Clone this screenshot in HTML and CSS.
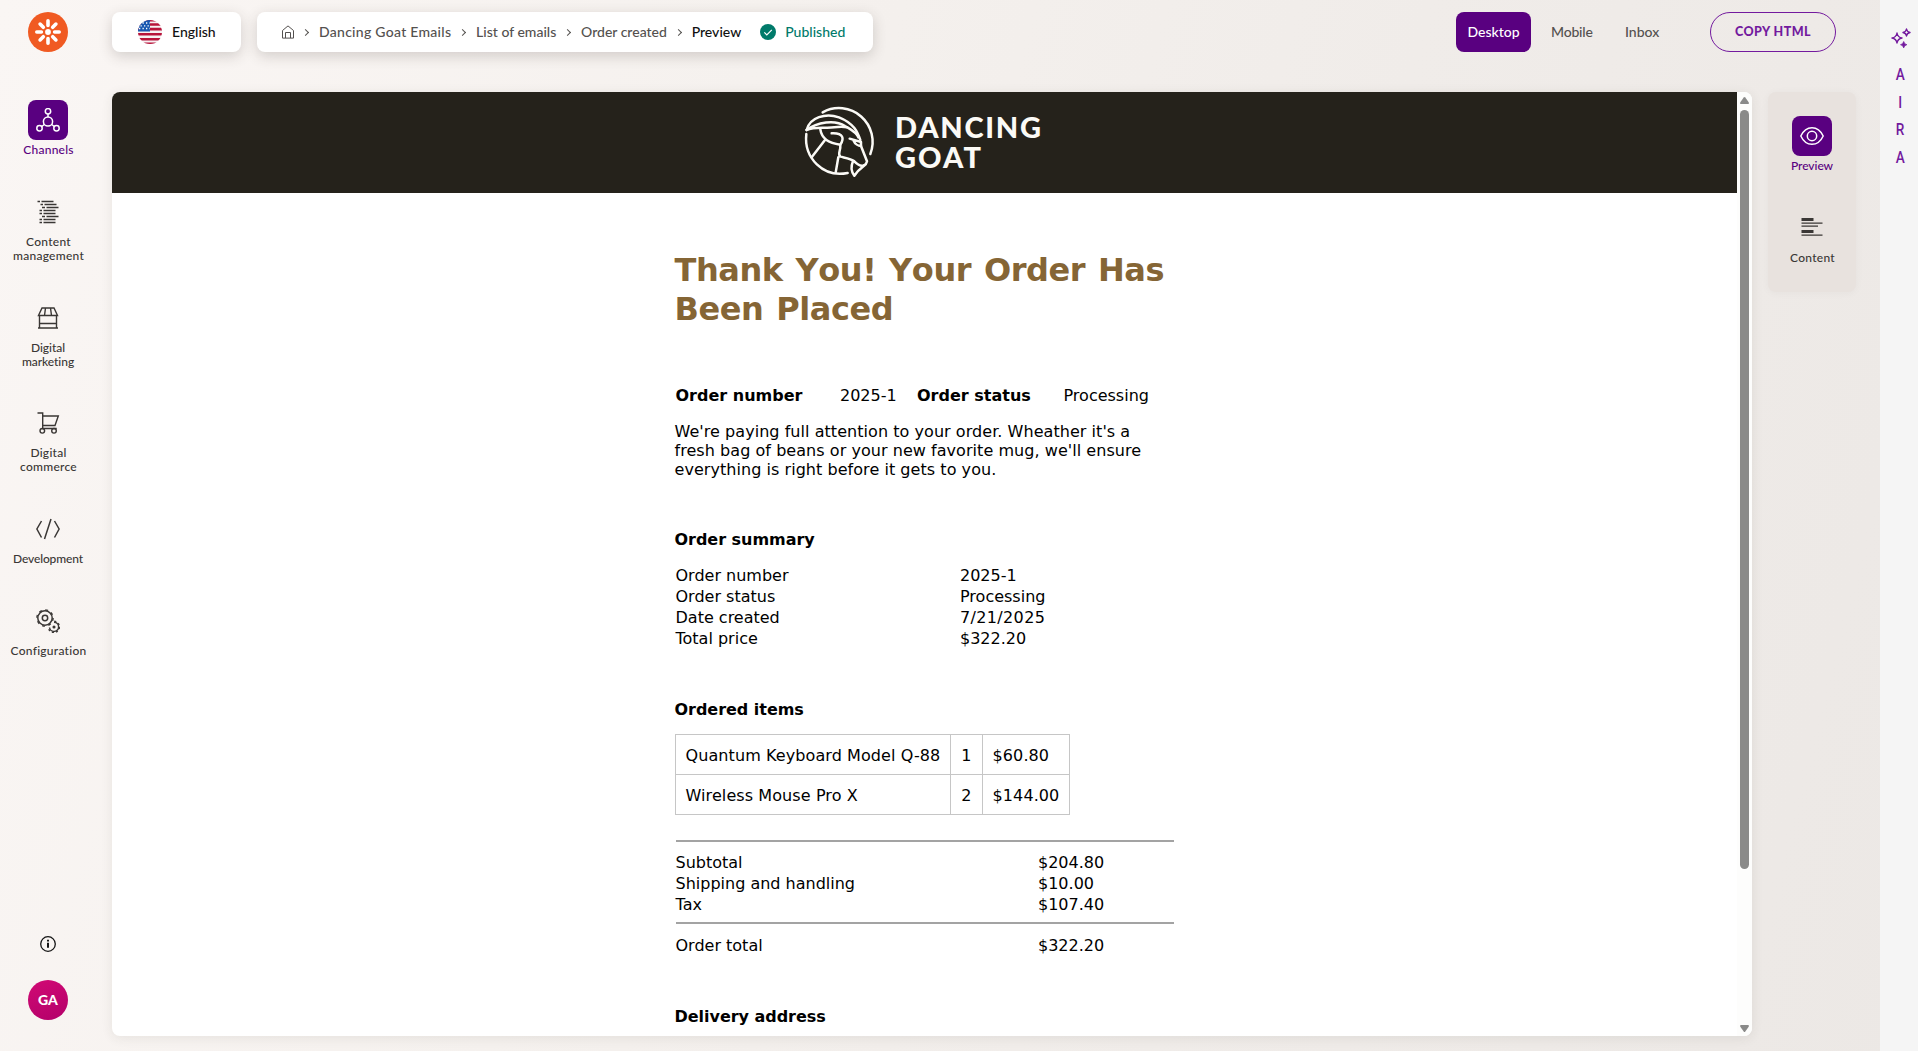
FILE: index.html
```html
<!DOCTYPE html>
<html lang="en">
<head>
<meta charset="utf-8">
<title>Order created - Preview</title>
<link rel="stylesheet" href="styles.css">
</head>
<body>
<div class="app">
  <nav class="sidebar">
    <svg class="logo" viewBox="0 0 40 40" width="40" height="40">
      <circle cx="20" cy="20" r="20" fill="#f05a22"/>
      <circle cx="20" cy="20" r="2.9" fill="#fff"/>
      <g stroke="#fff" stroke-width="3.6" stroke-linecap="round">
        <path d="M20 8.8v4.6M20 26.600v4.600M8.800 20h4.600M26.600 20h4.600M12.100 12.100l3.200 3.200M24.700 24.700l3.200 3.200M12.100 27.900l3.200-3.200M24.700 15.300l3.200-3.200"/>
      </g>
    </svg>
    <ul class="menu">
      <li class="item active">
        <span class="tile"><svg viewBox="0 0 24 24" width="24" height="24" fill="none" stroke="#fff" stroke-width="1.500"><circle cx="12" cy="13.500" r="4.600"/><circle cx="12" cy="3.300" r="2.700"/><circle cx="3.500" cy="20.300" r="2.700"/><circle cx="20.500" cy="20.300" r="2.700"/><path d="M12 6v3M8.300 16.500l-2.500 2M15.700 16.500l2.500 2"/></svg></span>
        <span class="label wide">Channels</span>
      </li>
      <li class="item">
        <span class="tile"><svg viewBox="0 0 24 24" width="24" height="24" fill="none" stroke="#3a3735" stroke-width="1.400"><path d="M1.500 1.500h2.500M5.500 1.500h12M4.500 4.500h2.500M8.500 4.500h12M6 7.500h3M10.500 7.500h12M3.500 10.500h2.500M7.500 10.500h12M3.500 13.500h2.500M7.500 13.500h12M6 16.500h3M10.500 16.500h12M3.500 19.500h2.500M7.500 19.500h12M3.500 22.500h2.500M7.500 22.500h12"/></svg></span>
        <span class="label wide">Content<br>management</span>
      </li>
      <li class="item">
        <span class="tile"><svg viewBox="0 0 24 24" width="24" height="24" fill="none" stroke="#3a3735" stroke-width="1.400"><path d="M6 2h12l3.500 7.500h-19zM9.500 2l-1 7.500M14.500 2l1 7.500M3.500 9.500v12.500M20.500 9.500v12.500M3.500 17.500h17M2 22h20"/></svg></span>
        <span class="label close">Digital<br>marketing</span>
      </li>
      <li class="item">
        <span class="tile"><svg viewBox="0 0 24 24" width="24" height="24" fill="none" stroke="#3a3735" stroke-width="1.400"><path d="M1.500 2h5.200v15.500h14M6.700 5h15.600l-3.300 9.500h-12.300"/><circle cx="6.300" cy="19.800" r="2.300"/><circle cx="18" cy="19.800" r="2.300"/></svg></span>
        <span class="label wide">Digital<br>commerce</span>
      </li>
      <li class="item">
        <span class="tile"><svg viewBox="0 0 24 24" width="24" height="24" fill="none" stroke="#3a3735" stroke-width="1.500"><path d="M5.500 4L.9 12l4.600 8.500M18.500 4l4.600 8-4.600 8.500M15 2L8.500 22"/></svg></span>
        <span class="label tight">Development</span>
      </li>
      <li class="item">
        <span class="tile"><svg viewBox="0 0 24 24" width="24" height="24" fill="none" stroke="#3a3735" stroke-width="1.500"><circle cx="9" cy="9" r="2.700"/><circle cx="9" cy="9" r="7.200"/><circle cx="9" cy="9" r="8.100" stroke-width="1.400" stroke-dasharray="2.800 3.560"/><path d="M13.500 18.500a4.600 4.600 0 1 0 4.500-5.300"/><path d="M12.800 20.300a5.600 5.600 0 1 0 5.200-8" stroke-dasharray="2 2.200"/><circle cx="18" cy="18" r=".8" fill="#3a3735"/></svg></span>
        <span class="label wide">Configuration</span>
      </li>
    </ul>
    <svg class="info" viewBox="0 0 16 16" width="16" height="16"><circle cx="8" cy="8" r="7.300" fill="none" stroke="#151515" stroke-width="1.300"/><path d="M8 3.700v1.900M8 6.800v5" stroke="#151515" stroke-width="2"/></svg>
    <span class="avatar">GA</span>
  </nav>

  <main class="main">
    <header class="topbar">
      <div class="card language">
        <svg viewBox="0 0 24 24" width="24" height="24">
          <defs><clipPath id="flag"><circle cx="12" cy="12" r="12"/></clipPath></defs>
          <g clip-path="url(#flag)">
            <path fill="#f7f0f2" d="M0 0h24v24H0z"/>
            <path fill="#b8133a" d="M0 0h24v1.500H0zM0 3.200h24v2.500H0zM0 7.800h24v2.700H0zM0 13h24v2.600H0zM0 18h24v2.400H0zM0 22.500h24v1.500H0z"/>
            <path fill="#1a57b0" d="M0 0h12v11.500H0z"/>
            <path stroke="#fff" stroke-width="1.300" stroke-dasharray="1.300 2.200" d="M1 3h11M2.500 5.800h9.500M1 8.500h11"/>
          </g>
        </svg>
        <span>English</span>
      </div>
      <div class="card crumbs">
        <svg class="home" viewBox="0 0 14 14" width="14" height="14" fill="none" stroke="#54514f"><path d="M1.500 5.500L7 .9l5.500 4.600v7.600h-11zM4.500 13V7.500h5V13"/></svg>
        <i class="chevron"></i><span class="spread">Dancing Goat Emails</span>
        <i class="chevron"></i><span>List of emails</span>
        <i class="chevron"></i><span>Order created</span>
        <i class="chevron"></i><span class="current">Preview</span>
        <span class="status"><svg viewBox="0 0 16 16" width="16" height="16"><circle cx="8" cy="8" r="8" fill="#007a6a"/><path d="M4.300 8.300l2.500 2.500 5-5" fill="none" stroke="#fff" stroke-width="1.200"/></svg>Published</span>
      </div>
      <div class="modes">
        <span class="mode selected">Desktop</span>
        <span class="mode mobile">Mobile</span>
        <span class="mode inbox">Inbox</span>
      </div>
      <span class="copy">COPY HTML</span>
    </header>

    <div class="workspace">
      <section class="preview">
        <div class="mail">
          <div class="banner">
            <svg viewBox="0 0 250 86" width="250" height="86">
              <g transform="scale(.3333)" fill="none" stroke="#fbfaf6" stroke-width="7.500" stroke-linecap="round" stroke-linejoin="round">
                <path d="M83 43A101 101 0 0 1 226 168"/>
                <path d="M34 108C26 180 85 240 158 225"/>
                <path d="M35 96C44 58 92 44 132 58C178 76 188 104 196 126"/>
                <path d="M35 96C66 72 120 64 150 84C166 94 184 102 190 118"/>
                <path d="M35 96C60 84 95 92 118 88C134 86 145 86 156 88"/>
                <path d="M76 94C80 122 104 136 136 140"/>
                <path d="M110 106C146 104 148 122 136 140C138 160 126 168 136 176C152 180 168 182 178 190C188 200 196 206 206 202"/>
                <path d="M90 126L50 178M130 178L122 224"/>
                <path d="M164 122L198 132L198 144C190 144 180 138 176 128"/>
                <path d="M198 144L216 190C214 206 200 202 178 233C166 218 168 204 174 190"/>
              </g>
              <g class="wordmark" fill="#fbfaf6">
                <text x="100" y="40" textLength="146">DANCING</text>
                <text x="100" y="70" textLength="86">GOAT</text>
              </g>
            </svg>
          </div>
          <article class="letter">
            <h1>Thank You! Your Order Has Been Placed</h1>
            <div class="headline">
              <b>Order number</b><span>2025-1</span><b>Order status</b><span>Processing</span>
            </div>
            <p>We're paying full attention to your order. Wheather it's a fresh bag of beans or your new favorite mug, we'll ensure everything is right before it gets to you.</p>
            <h2>Order summary</h2>
            <dl class="summary">
              <dt>Order number</dt><dd>2025-1</dd>
              <dt>Order status</dt><dd>Processing</dd>
              <dt>Date created</dt><dd class="date">7/21/2025</dd>
              <dt>Total price</dt><dd>$322.20</dd>
            </dl>
            <h2 class="items-title">Ordered items</h2>
            <table class="items">
              <tr><td>Quantum Keyboard Model Q-88</td><td>1</td><td>$60.80</td></tr>
              <tr><td>Wireless Mouse Pro X</td><td>2</td><td>$144.00</td></tr>
            </table>
            <dl class="totals">
              <dt>Subtotal</dt><dd>$204.80</dd>
              <dt>Shipping and handling</dt><dd>$10.00</dd>
              <dt>Tax</dt><dd>$107.40</dd>
            </dl>
            <dl class="totals grand">
              <dt>Order total</dt><dd>$322.20</dd>
            </dl>
            <h2 class="delivery">Delivery address</h2>
          </article>
        </div>
        <div class="scrollbar">
          <svg viewBox="0 0 9 7" width="9" height="7"><path d="M3.700.6q.8-1 1.600 0L8.700 5.200Q9.300 7 8 7H1Q-.3 7 .3 5.200z" fill="#8a8a89"/></svg>
          <i class="thumb"></i>
          <svg class="down" viewBox="0 0 9 7" width="9" height="7"><path d="M3.700 6.400q.8 1 1.600 0L8.700 1.800Q9.300 0 8 0H1Q-.3 0 .3 1.800z" fill="#8a8a89"/></svg>
        </div>
      </section>
      <aside class="tabs">
        <div class="item active">
          <span class="tile"><svg viewBox="0 0 24 24" width="24" height="24" fill="none" stroke="#fff" stroke-width="1.500"><path d="M.8 12C6 .9 18 .9 23.200 12C18 23.100 6 23.100.8 12z"/><circle cx="12" cy="12" r="4.700"/></svg></span>
          <span class="label close">Preview</span>
        </div>
        <div class="item">
          <span class="tile"><svg viewBox="0 0 24 24" width="24" height="24" fill="#3a3735"><path d="M1.500 2h12v3H1.500zM1.500 6.500h21v1.300h-21zM1.500 9.500h16.500v1.300H1.500zM1.500 14h12v3H1.500zM1.500 18.500h21v1.300h-21z"/></svg></span>
          <span class="label wide">Content</span>
        </div>
      </aside>
    </div>
  </main>

  <aside class="aira">
    <svg viewBox="0 0 20 20" width="20" height="20" fill="none" stroke="#731a9e" stroke-width="1.400" stroke-linejoin="round"><path d="M6 5q.7 4.300 5 5-4.300.7-5 5-.7-4.300-5-5 4.300-.7 5-5zM15.500 1q.5 3 3.500 3.500-3 .5-3.500 3.500-.5-3-3.500-3.500 3-.5 3.500-3.500z"/><path fill="#731a9e" stroke-width=".7" d="M12.700 13.500q.5 2.700 3.200 3.200-2.700.5-3.200 3.200-.5-2.700-3.200-3.200 2.700-.5 3.200-3.200z"/></svg>
    <span>A</span><span>I</span><span>R</span><span>A</span>
  </aside>
</div>
</body>
</html>
```
FILE: styles.css
```css
* { box-sizing: border-box; }

body {
  margin: 0;
  font: 500 14px/20px Lato, sans-serif;
  color: #54514f;
}

ul, dl, dd, h1, h2, p { margin: 0; padding: 0; }
svg { display: block; flex: none; }

.app {
  display: flex;
  height: 1051px;
  overflow: hidden;
  background: linear-gradient(105deg, #faf6f4 0%, #f5f1ee 35%, #f0ece9 65%, #ece8e5 100%);
}

/* Left navigation */
.sidebar {
  width: 96px;
  padding: 12px 0 31px;
  display: flex;
  flex-direction: column;
  align-items: center;
}
.menu {
  list-style: none;
  margin-top: 48px;
  display: flex;
  flex-direction: column;
  gap: 35px;
}
.item {
  display: flex;
  flex-direction: column;
  align-items: center;
  gap: 3px;
  color: #3a3735;
}
.tile {
  width: 40px;
  height: 40px;
  border-radius: 8px;
  display: flex;
  align-items: center;
  justify-content: center;
}
.active { color: #590080; }
.active .tile { background: #590080; }
.label {
  padding-left: 1px;
  font-size: 12px;
  line-height: 14px;
  text-align: center;
  white-space: nowrap;
}
.close { line-height: 13.500px; letter-spacing: -0.05px; padding-left: 0; }
.wide { letter-spacing: 0.27px; }
.tight { letter-spacing: -0.12px; padding-left: 0; }
.info { margin-top: auto; }
.avatar {
  width: 40px;
  height: 40px;
  margin-top: 28px;
  border-radius: 50%;
  background: linear-gradient(160deg, #d10a74, #b3006a);
  color: #fff;
  font-size: 14px;
  font-weight: 900;
  line-height: 40px;
  text-align: center;
}

/* Top bar */
.main { flex: 1; padding: 12px 24px 0 16px; }
.topbar { display: flex; height: 40px; }
.card {
  display: flex;
  align-items: center;
  height: 40px;
  border-radius: 8px;
  background: #fff;
  box-shadow: 0 4px 14px rgba(60, 50, 45, 0.2);
  white-space: nowrap;
}
.language { width: 129px; padding-left: 26px; gap: 10px; color: #111; }
.crumbs { width: 616px; margin-left: 16px; padding-left: 24px; }
.home { margin-right: 10px; }
.chevron {
  width: 5px;
  height: 5px;
  margin: 0 11px 0 -2px;
  border: solid #54514f;
  border-width: 1px 1px 0 0;
  transform: rotate(45deg);
}
.crumbs span + .chevron { margin-left: 8.800px; }
.spread { letter-spacing: 0.28px; }
.current { color: #111; }
.status { display: flex; align-items: center; gap: 9px; margin-left: 19px; color: #007a6a; }
.modes { display: flex; margin-left: 583px; line-height: 40px; }
.selected {
  width: 75px;
  border-radius: 8px;
  background: #590080;
  color: #fff;
  text-align: center;
}
.mobile { width: 74px; margin-left: 20px; letter-spacing: -0.2px; }
.inbox { width: 85px; }
.copy {
  width: 126px;
  border: 1px solid #731a9e;
  border-radius: 20px;
  color: #731a9e;
  font-size: 12.500px;
  font-weight: 900;
  letter-spacing: 0.45px;
  line-height: 38px;
  text-align: center;
}

/* Preview pane */
.workspace { display: flex; align-items: flex-start; gap: 16px; margin-top: 40px; }
.preview {
  width: 1640px;
  height: 944px;
  display: flex;
  border-radius: 8px;
  overflow: hidden;
  background: #fff;
  box-shadow: 0 2px 12px rgba(60, 50, 45, 0.09);
}
.mail {
  width: 1625px;
  overflow: hidden;
  color: #000;
  font: 16px/19px "DejaVu Sans", Verdana, sans-serif;
}
.banner {
  height: 101px;
  padding-top: 6px;
  padding-left: 683px;
  background: #25221b;
}
.wordmark { font: 900 29px Lato, sans-serif; }
.letter { width: 500px; margin: 0 auto; padding-top: 58px; }
h1 { color: #856535; font-size: 32px; line-height: 39px; letter-spacing: -0.41px; word-spacing: 2px; font-kerning: none; }
h2 { margin-top: 51px; font-size: 16px; line-height: 19px; letter-spacing: -0.03px; }
.headline {
  display: grid;
  grid-template-columns: 164.500px 77px 146.500px auto;
  margin-top: 57px;
  padding-left: 1px;
}
.headline b { white-space: nowrap; }
p { width: 485px; margin-top: 17px; letter-spacing: 0.05px; }
.summary, .totals { display: grid; row-gap: 2px; padding-left: 1px; }
.summary { grid-template-columns: 284.500px auto; margin-top: 17px; }
.date { letter-spacing: 0.35px; }
.items-title { margin-top: 52px; }
.items { margin: 15px 0 0; border-collapse: collapse; }
.items td { height: 40px; padding: 2px 10px 0; border: 1px solid #c6c6c6; letter-spacing: 0.09px; }
.totals {
  grid-template-columns: 362.500px auto;
  width: 498px;
  margin: 25px 0 0 1px;
  padding: 11px 0 8px;
  border-top: 2px solid #a3a3a3;
}
.grand { margin-top: 0; padding: 12px 0 0; }
.delivery { margin-top: 52px; }

.scrollbar {
  width: 15px;
  padding: 5px 0 4px;
  display: flex;
  flex-direction: column;
  align-items: center;
  background: #fdfdfc;
}
.thumb { width: 9px; height: 759px; margin-top: 6px; border-radius: 5px; background: #8a8a89; }
.down { margin-top: auto; }

/* Right-hand tabs */
.tabs {
  width: 88px;
  height: 200px;
  padding-top: 24px;
  display: flex;
  flex-direction: column;
  gap: 35px;
  border-radius: 8px;
  background: #e8e2de;
  box-shadow: 0 1px 8px rgba(60, 50, 45, 0.04);
}

.aira {
  width: 38px;
  padding: 28px 0 0 3px;
  display: flex;
  flex-direction: column;
  align-items: center;
  background: #f5f5f5;
  color: #731a9e;
  font: 500 16px/27.600px Roboto, sans-serif;
}
.aira svg { margin-bottom: 13px; }
.aira span { transform: scaleX(0.85); }
```
